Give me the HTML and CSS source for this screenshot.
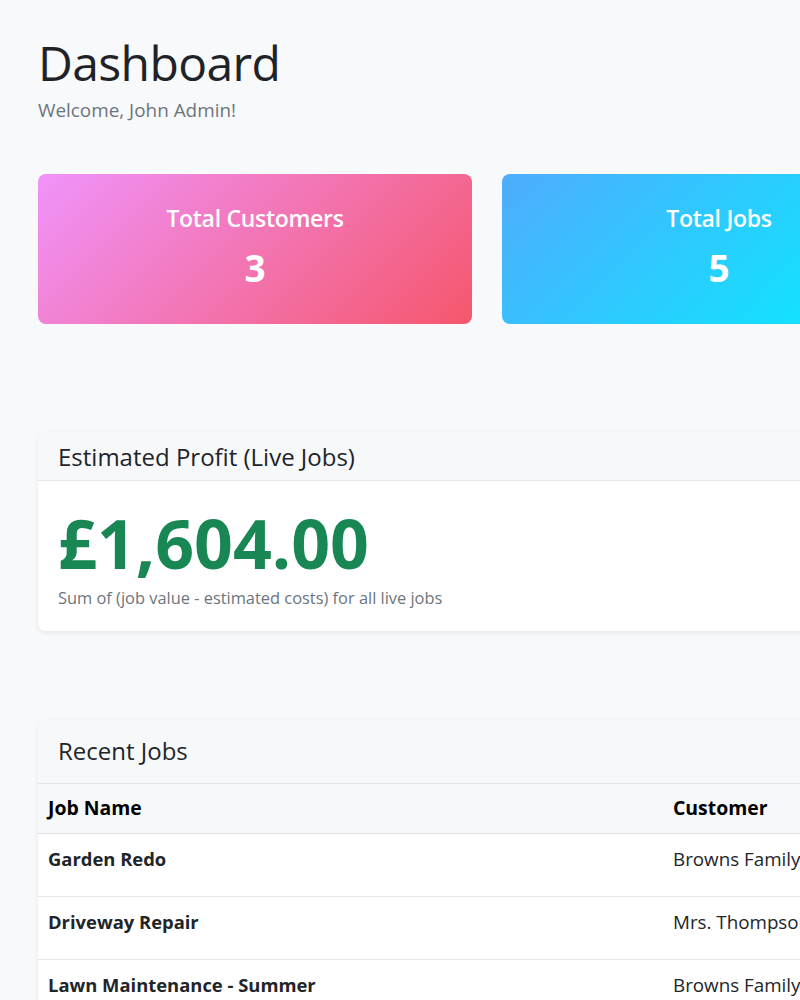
FILE: index.html
```html
<!DOCTYPE html>
<html lang="en">
<head>
<meta charset="utf-8">
<title>Dashboard</title>
<link rel="stylesheet" href="styles.css">
</head>
<body>
<main class="page">
  <header class="page-head">
    <h1 class="title">Dashboard</h1>
    <p class="welcome">Welcome, John Admin!</p>
  </header>

  <section class="stats">
    <div class="stat stat-pink">
      <h5 class="stat-label">Total Customers</h5>
      <div class="stat-value">3</div>
    </div>
    <div class="stat stat-blue">
      <h5 class="stat-label">Total Jobs</h5>
      <div class="stat-value">5</div>
    </div>
  </section>

  <section class="card profit-card">
    <div class="card-header">
      <h5 class="card-title">Estimated Profit (Live Jobs)</h5>
    </div>
    <div class="card-body profit-body">
      <div class="profit-value">£1,604.00</div>
      <small class="profit-note">Sum of (job value - estimated costs) for all live jobs</small>
    </div>
  </section>

  <section class="card jobs-card">
    <div class="card-header jobs-header">
      <h5 class="card-title">Recent Jobs</h5>
    </div>
    <table class="jobs-table">
      <thead>
        <tr>
          <th class="col-name">Job Name</th>
          <th class="col-customer">Customer</th>
        </tr>
      </thead>
      <tbody>
        <tr>
          <td class="job-name">Garden Redo</td>
          <td>Browns Family</td>
        </tr>
        <tr>
          <td class="job-name">Driveway Repair</td>
          <td>Mrs. Thompson</td>
        </tr>
        <tr>
          <td class="job-name">Lawn Maintenance - Summer</td>
          <td>Browns Family</td>
        </tr>
      </tbody>
    </table>
  </section>
</main>
</body>
</html>
```

FILE: styles.css
```css
html {
  overflow: hidden;
}

body {
  margin: 0;
  background: #f8f9fa;
  font-family: "Open Sans", "Noto Sans", sans-serif;
  color: #212529;
}

.page {
  width: 1600px;
  padding: 33px 38px 40px;
}

.title {
  margin: 0;
  font-size: 48px;
  font-weight: 500;
  letter-spacing: -0.6px;
  line-height: 60px;
  color: #1f2327;
}

.welcome {
  margin: 2px 0 0;
  font-size: 18.9px;
  line-height: 30px;
  color: #6c757d;
}

.stats {
  display: flex;
  gap: 30px;
  margin-top: 49px;
}

.stat {
  width: 434px;
  height: 150px;
  box-sizing: border-box;
  flex: none;
  border-radius: 8px;
  padding-top: 29px;
  text-align: center;
  color: #fff;
}

.stat-pink {
  background: linear-gradient(135deg, #f093fb 0%, #f5576c 100%);
}

.stat-blue {
  background: linear-gradient(135deg, #4facfe 0%, #00f2fe 100%);
}

.stat-label {
  margin: 0;
  font-size: 23px;
  font-weight: 600;
  letter-spacing: -0.3px;
  line-height: 30px;
}

.stat-value {
  margin-top: 13px;
  font-size: 37px;
  font-weight: 700;
  line-height: 44px;
}

.card {
  background: #fff;
  border-radius: 8px;
  box-shadow: 0 2px 5px rgba(0, 0, 0, 0.075);
  overflow: hidden;
}

.profit-card {
  margin-top: 108px;
}

.card-header {
  background: #f7f8f9;
  border-bottom: 1px solid #e4e6e9;
  padding: 10px 20px 8px;
}

.card-title {
  margin: 0;
  font-size: 24px;
  font-weight: 500;
  line-height: 30px;
  color: #212529;
}

.card-body {
  padding: 20px;
}

.profit-body {
  padding-top: 24px;
}

.profit-value {
  font-size: 68px;
  font-weight: 700;
  line-height: 76px;
  color: #198754;
}

.profit-note {
  display: block;
  margin-top: 4px;
  font-size: 16.4px;
  line-height: 26px;
  color: #6c757d;
}

.jobs-card {
  margin-top: 89px;
}

.jobs-header {
  padding: 16px 20px 17px;
}

.jobs-table {
  width: 100%;
  border-collapse: collapse;
  table-layout: fixed;
  font-size: 18.8px;
  line-height: 30px;
}

.col-name {
  width: 605px;
}

.jobs-table th {
  background: #f7f8f9;
  color: #000;
  font-size: 19.4px;
  font-weight: 700;
  text-align: left;
  padding: 9px 10px 10px;
  border-bottom: 1px solid #dee2e6;
}

.jobs-table td {
  padding: 10px 10px 22px;
  vertical-align: top;
  color: #212529;
  border-bottom: 1px solid #e4e6e9;
  white-space: nowrap;
}

.jobs-table td.job-name {
  font-size: 18.4px;
  font-weight: 700;
}
```
